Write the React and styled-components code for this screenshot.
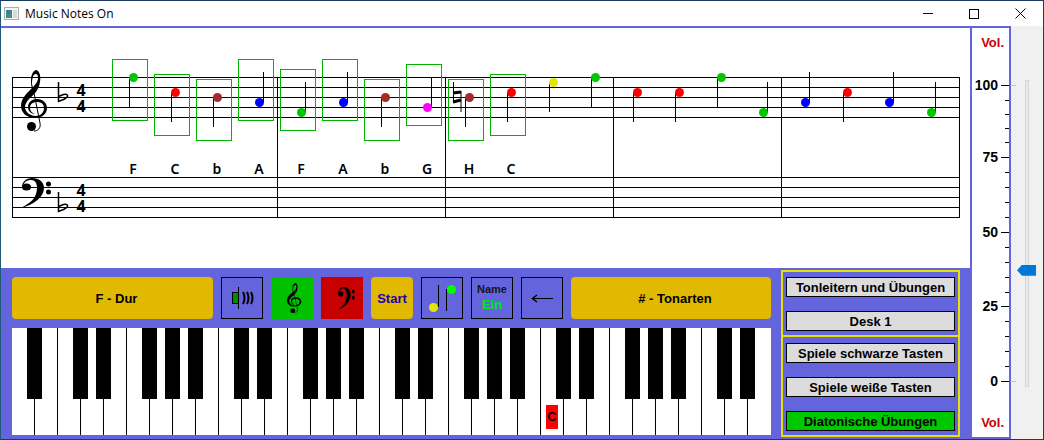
import React, { useState } from 'react';
import styled, { createGlobalStyle } from 'styled-components';

const GlobalStyle = createGlobalStyle`
  * {
    box-sizing: border-box;
  }
  body {
    margin: 0;
    background-color: #ffffff;
    font-family: 'Liberation Sans', Arial, sans-serif;
    font-size: 13px;
    font-weight: bold;
    color: #000000;
  }
  button {
    padding: 0;
    font: inherit;
    color: inherit;
  }
`;

const Window = styled.div`
  display: flex;
  flex-direction: column;
  min-height: 100vh;
  border: 1px solid #1c3a5e;
  border-left-color: #1d5a78;
`;

const TitleBar = styled.header`
  display: flex;
  align-items: center;
  height: 25px;
  padding-left: 3px;
  background-color: #ffffff;
`;

const Title = styled.h1`
  flex: 1;
  margin: 0 0 0 6px;
  font-family: 'Open Sans', 'Noto Sans', sans-serif;
  font-size: 12px;
  font-weight: normal;
`;

const WindowButton = styled.button`
  display: flex;
  justify-content: center;
  align-items: center;
  width: 46px;
  height: 25px;
  border: none;
  background: none;
`;

const Body = styled.div`
  display: flex;
  flex: 1;
`;

const LeftArea = styled.main`
  display: flex;
  flex: 1;
  flex-direction: column;
  min-width: 0;
  padding-top: 2px;
  background-color: #6464dc;
`;

const ScoreSheet = styled.svg`
  display: block;
  width: 100%;
  height: 240px;
  background-color: #ffffff;
  font-family: 'Noto Sans', sans-serif;
  text-anchor: middle;
`;

const ControlPanel = styled.section`
  display: flex;
  flex: 1;
  align-items: flex-start;
  gap: 10px;
  padding: 2px 10px 2px 11px;
`;

const Instrument = styled.div`
  flex: 1;
  min-width: 0;
  padding-top: 7px;
`;

const Toolbar = styled.div`
  display: grid;
  grid-template-columns: minmax(0, 201fr) repeat(7, 42px) minmax(0, 200fr);
  gap: 8px;
  margin-bottom: 9px;
`;

const GoldButton = styled.button`
  height: 42px;
  padding-left: ${(props) => (props.$wide ? '8px' : '0')};
  border: none;
  border-radius: 4px;
  background-color: #e1b900;
  color: ${(props) => props.$color || '#000000'};
`;

const IconButton = styled.button`
  display: flex;
  flex-direction: column;
  justify-content: center;
  align-items: center;
  height: 42px;
  border: 1px solid ${(props) => props.$fill || '#000000'};
  background-color: ${(props) => props.$fill || 'transparent'};
`;

const NameLabel = styled.span`
  font-size: 11px;
  line-height: 14px;
  color: #141414;
`;

const NameState = styled.span`
  line-height: 18px;
  color: #00e614;
`;

const Keyboard = styled.div`
  display: grid;
  grid-template-columns: repeat(33, minmax(0, 1fr));
  height: 107px;
  background-color: #ffffff;
`;

const KeySlot = styled.div`
  position: relative;
  display: flex;
`;

const WhiteKey = styled.button`
  display: flex;
  flex: 1;
  justify-content: flex-end;
  align-items: flex-end;
  padding: 0 5px 6px 0;
  border: none;
  border-right: 1px solid ${(props) => (props.$last ? '#ffffff' : '#000000')};
  background-color: #ffffff;
`;

const BlackKey = styled.button`
  position: absolute;
  top: 0;
  right: -7px;
  z-index: 1;
  width: 15px;
  height: 71px;
  border: none;
  background-color: #000000;
`;

const KeyMarker = styled.span`
  width: 12px;
  height: 24px;
  background-color: #ff0000;
  line-height: 24px;
  text-align: center;
`;

const ExerciseBox = styled.nav`
  width: 179px;
  border: 2px solid #e6e100;
`;

const ExerciseGroup = styled.div`
  display: flex;
  flex-direction: column;
  gap: 14px;
  padding: 5px 3px 4px;

  & + & {
    padding-top: 6px;
    border-top: 2px solid #e6e100;
  }
`;

const ExerciseButton = styled.button`
  height: 20px;
  border: 1px solid #000000;
  background-color: ${(props) => (props.$active ? '#00c800' : '#dcdcdc')};
  white-space: nowrap;
`;

const VolumeScale = styled.aside`
  display: flex;
  flex-direction: column;
  align-items: flex-end;
  width: 41px;
  padding-top: 7px;
  border: 2px solid #6464dc;
  background-color: #ffffff;
`;

const VolumeLabel = styled.label`
  padding-right: 5px;
  line-height: 16px;
  color: #c80000;
`;

const ScaleDrawing = styled.svg`
  display: block;
  width: 37px;
  height: 364px;
`;

const SliderPane = styled.div`
  width: 32px;
  padding: 54px 0 0 6px;
  background-color: #f0f0f0;
  background-image: linear-gradient(#c4c4c4, #c4c4c4), linear-gradient(#c4c4c4, #c4c4c4);
  background-position: 1px 59px, 1px 355px;
  background-size: 4px 1px;
  background-repeat: no-repeat;
`;

const VolumeSlider = styled.input`
  appearance: none;
  display: block;
  width: 19px;
  height: 307px;
  margin: 0;
  background: none;
  writing-mode: vertical-lr;
  direction: rtl;

  &::-webkit-slider-runnable-track {
    width: 4px;
    margin: 0 7px 0 8px;
    border: 1px solid #d6d6d6;
    background-color: #e7eaea;
  }
  &::-webkit-slider-thumb {
    appearance: none;
    width: 19px;
    height: 11px;
    margin-left: -9px;
    background-color: #0078d7;
    clip-path: polygon(0 50%, 5px 0, 100% 0, 100% 100%, 5px 100%);
  }
`;

const colors = {
  F: '#00c800',
  C: '#ff0000',
  b: '#a52a2a',
  H: '#a52a2a',
  A: '#0000ff',
  G: '#ff00ff',
  E: '#e6e600',
};

// y is the centre of the note head, counted from the top of the sheet
const notes = [
  { name: 'F', y: 49, played: true },
  { name: 'C', y: 64, played: true },
  { name: 'b', y: 69, played: true },
  { name: 'A', y: 74, up: true, played: true },
  { name: 'F', y: 84, up: true, played: true },
  { name: 'A', y: 74, up: true, played: true },
  { name: 'b', y: 69, played: true },
  { name: 'G', y: 79, up: true, played: true },
  { name: 'H', y: 69, played: true, natural: true },
  { name: 'C', y: 64, played: true },
  { name: 'E', y: 54 },
  { name: 'F', y: 49 },
  { name: 'C', y: 64 },
  { name: 'C', y: 64 },
  { name: 'F', y: 49 },
  { name: 'F', y: 84, up: true },
  { name: 'A', y: 74, up: true },
  { name: 'C', y: 64 },
  { name: 'A', y: 74, up: true },
  { name: 'F', y: 84, up: true },
];

const staffLines = [49, 59, 69, 79, 89, 149, 159, 169, 179, 189];
const barLines = [11, 276, 444, 612, 780, 958];

function TrebleClef() {
  return (
    <>
      <path d="M15 0C19 1 20 7 19 12C18 19 14 24 9 28C5 32 4 35 4 38C5 43 10 46 15 46C20 46 23 42 23 38C23 34 20 32 16 32C12 32 9 34 9 38C9 41 11 43 14 44C10 44 7 41 7 37C7 32 11 29 16 29C22 29 26 33 26 38C26 44 21 48 14 48C6 48 0 43 0 36C0 29 5 24 10 19C14 15 17 12 17 8C17 5 16 4 15 4C12 4 11 9 11 14L13 22L12 22C10 17 10 13 10 10C10 5 12 1 15 0Z" />
      <path d="M12 18L19 53C20 58 17 61 13 61" fill="none" stroke="#000000" />
      <circle cx="10.5" cy="56.5" r="4.5" />
    </>
  );
}

function BassClef() {
  return (
    <>
      <path d="M0 30C10 26 17 20 17 10C17 5 15 2 11 2C7 2 4 4 3 8L2 9C2 4 6 0 12 0C19 0 24 4 24 10C24 19 14 27 0 30Z" />
      <ellipse cx="6.5" cy="9" rx="4.5" ry="3.5" />
      <circle cx="28.5" cy="6" r="2.5" />
      <circle cx="28.5" cy="14" r="2.5" />
    </>
  );
}

function Flat({ x, y }) {
  return (
    <path
      d={`M${x + 0.5} ${y}v19.5l5-2c6-3 5-6 0-5l-5 2`}
      fill="none"
      stroke="#000000"
      strokeWidth="1.5"
    />
  );
}

function Natural({ x, y }) {
  return (
    <>
      <path d={`M${x + 0.5} ${y - 15}v21M${x + 8} ${y - 6}v21`} stroke="#000000" />
      <path d={`M${x} ${y - 4}l8-1M${x} ${y + 5}l8-2`} stroke="#000000" strokeWidth="3" />
    </>
  );
}

function Note({ note, index }) {
  const x = 132 + 42 * index;
  const stemX = note.up ? x + 4.5 : x - 3.5;
  return (
    <g>
      {note.played && (
        <rect
          x={x - 20.5}
          y={note.y - (note.up ? 43 : 18) + 0.5}
          width="35"
          height="61"
          fill="none"
          stroke="#00b400"
        />
      )}
      {note.natural && <Natural x={x - 16} y={note.y} />}
      <path d={`M${stemX} ${note.y + 0.5}V${note.y + (note.up ? -30 : 30)}`} stroke="#000000" />
      <circle cx={x + 0.5} cy={note.y + 0.5} r="4.5" fill={colors[note.name]} />
      {note.played && (
        <text x={x} y="146" fontSize="14" fontWeight="600">
          {note.name}
        </text>
      )}
    </g>
  );
}

function Score() {
  return (
    <ScoreSheet viewBox="0 0 969 240" preserveAspectRatio="xMinYMin meet">
      {staffLines.map((y) => (
        <path key={y} d={`M11 ${y + 0.5}H959`} stroke="#000000" />
      ))}
      {barLines.map((x) => (
        <path key={x} d={`M${x + 0.5} 49V190`} stroke="#000000" />
      ))}
      <g transform="translate(20 42)">
        <TrebleClef />
      </g>
      <g transform="translate(19 150)">
        <BassClef />
      </g>
      <Flat x={57} y={54} />
      <Flat x={57} y={164} />
      {[68, 84, 168, 184].map((y) => (
        <text key={y} x="80" y={y} fontSize="16" fontWeight="700">
          4
        </text>
      ))}
      {notes.map((note, index) => (
        <Note key={index} note={note} index={index} />
      ))}
    </ScoreSheet>
  );
}

function Keys() {
  // the keyboard starts on an A, so B is 1 and E is 4
  return (
    <Keyboard>
      {Array.from({ length: 33 }, (_, i) => {
        const hasBlack = i < 32 && i % 7 !== 1 && i % 7 !== 4;
        return (
          <KeySlot key={i}>
            <WhiteKey $last={i === 32} aria-label={'ABCDEFG'[i % 7]}>
              {i === 23 && <KeyMarker>C</KeyMarker>}
            </WhiteKey>
            {hasBlack && <BlackKey aria-label={'ABCDEFG'[i % 7] + '#'} />}
          </KeySlot>
        );
      })}
    </Keyboard>
  );
}

const scaleLabels = [
  [100, 34],
  [75, 106],
  [50, 181],
  [25, 255],
  [0, 330],
];
const minorTicks = [49, 63, 77, 91, 121, 136, 151, 166, 196, 211, 226, 241, 270, 285, 300, 315];

function Scale() {
  return (
    <ScaleDrawing viewBox="0 0 37 364">
      {scaleLabels.map(([label, y]) => (
        <g key={label}>
          <text x="26" y={y + 5} fontSize="14" textAnchor="end">
            {label}
          </text>
          <path d={`M29 ${y + 0.5}H37`} stroke="#000000" />
        </g>
      ))}
      {minorTicks.map((y) => (
        <path key={y} d={`M33 ${y + 0.5}H37`} stroke="#000000" />
      ))}
    </ScaleDrawing>
  );
}

function App() {
  const [volume, setVolume] = useState(37.5);
  return (
    <>
      <GlobalStyle />
      <Window>
        <TitleBar>
          <svg width="15" height="13" viewBox="0 0 15 13">
            <rect x="0.5" y="0.5" width="14" height="12" fill="#f4f4f4" stroke="#a8adb0" />
            <rect x="2" y="3" width="6" height="8" fill="#3f8f86" />
            <rect x="3" y="3" width="3" height="4" fill="#4a74a8" />
            <rect x="9" y="3" width="4" height="8" fill="#d5dcd8" />
          </svg>
          <Title>Music Notes On</Title>
          <WindowButton aria-label="Minimize">
            <svg width="10" height="11">
              <path d="M0 5.5H10" stroke="#000000" />
            </svg>
          </WindowButton>
          <WindowButton aria-label="Maximize">
            <svg width="10" height="10">
              <rect x="0.5" y="0.5" width="9" height="9" fill="none" stroke="#000000" />
            </svg>
          </WindowButton>
          <WindowButton aria-label="Close">
            <svg width="11" height="11">
              <path d="M0.5 0.5L10.5 10.5M10.5 0.5L0.5 10.5" stroke="#000000" />
            </svg>
          </WindowButton>
        </TitleBar>
        <Body>
          <LeftArea>
            <Score />
            <ControlPanel>
              <Instrument>
                <Toolbar>
                  <GoldButton $wide>F - Dur</GoldButton>
                  <IconButton aria-label="Ton">
                    <svg width="40" height="40" fill="none" stroke="#000000">
                      <rect x="10.5" y="14.5" width="6" height="11" fill="#008c00" />
                      <path d="M16.5 9V31" />
                      <path
                        d="M21 14q3 6 0 12M25 14q3 6 0 12M29 14q3 6 0 12"
                        strokeWidth="2"
                      />
                    </svg>
                  </IconButton>
                  <IconButton $fill="#00c000" aria-label="Violinschlüssel">
                    <svg width="40" height="40">
                      <g transform="translate(15 5) scale(0.55 0.49)">
                        <TrebleClef />
                      </g>
                    </svg>
                  </IconButton>
                  <IconButton $fill="#c80000" aria-label="Bassschlüssel">
                    <svg width="40" height="40">
                      <g transform="translate(15 9) scale(0.57 0.77)">
                        <BassClef />
                      </g>
                    </svg>
                  </IconButton>
                  <GoldButton $color="#1e00b4">Start</GoldButton>
                  <IconButton aria-label="Noten">
                    <svg width="40" height="40">
                      <path d="M16.5 7V29M24.5 11V33" stroke="#000000" />
                      <circle cx="11.5" cy="29.5" r="4.5" fill="#e6e600" />
                      <circle cx="29.5" cy="11.5" r="4.5" fill="#00ff00" />
                    </svg>
                  </IconButton>
                  <IconButton>
                    <NameLabel>Name</NameLabel>
                    <NameState>Ein</NameState>
                  </IconButton>
                  <IconButton aria-label="Zurück">
                    <svg width="40" height="40" fill="none" stroke="#000000">
                      <path d="M10 20.5H31" />
                      <path d="M15 17L10.5 20.5L15 24" strokeWidth="1.5" />
                    </svg>
                  </IconButton>
                  <GoldButton $wide># - Tonarten</GoldButton>
                </Toolbar>
                <Keys />
              </Instrument>
              <ExerciseBox>
                <ExerciseGroup>
                  <ExerciseButton>Tonleitern und Übungen</ExerciseButton>
                  <ExerciseButton>Desk 1</ExerciseButton>
                </ExerciseGroup>
                <ExerciseGroup>
                  <ExerciseButton>Spiele schwarze Tasten</ExerciseButton>
                  <ExerciseButton>Spiele weiße Tasten</ExerciseButton>
                  <ExerciseButton $active>Diatonische Übungen</ExerciseButton>
                </ExerciseGroup>
              </ExerciseBox>
            </ControlPanel>
          </LeftArea>
          <VolumeScale>
            <VolumeLabel htmlFor="volume">Vol.</VolumeLabel>
            <Scale />
            <VolumeLabel htmlFor="volume">Vol.</VolumeLabel>
          </VolumeScale>
          <SliderPane>
            <VolumeSlider
              id="volume"
              type="range"
              min="0"
              max="100"
              step="0.5"
              value={volume}
              onChange={(e) => setVolume(Number(e.target.value))}
            />
          </SliderPane>
        </Body>
      </Window>
    </>
  );
}

export default App;
